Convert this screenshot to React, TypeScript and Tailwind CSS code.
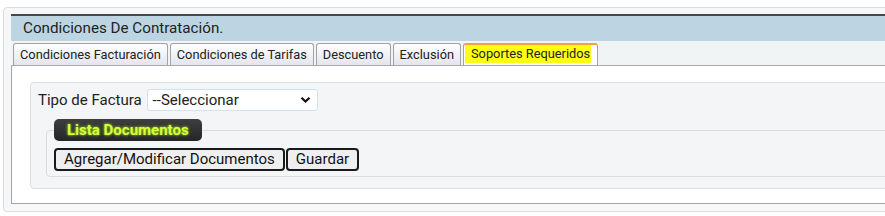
import React from "react";

const tabs = ["Condiciones Facturación", "Condiciones de Tarifas", "Descuento", "Exclusión"];

export default function App() {
  return (
    <div className="w-[885px] h-[216px] overflow-hidden bg-white font-['Roboto',sans-serif] text-[#222]">
      <div className="ml-[3px] mt-[7px] w-[900px] h-[205px] border border-[#dcdcdc] rounded-[4px] bg-[#f6f7f8] pl-[7px] pt-[6px]">
        <div className="border-t-2 border-[#474747]">
          <div className="h-[25px] bg-[#bdd5e3] pl-[12px] flex items-center text-[15.2px] text-[#222]">
            Condiciones De Contratación.
          </div>
          <div className="h-[25px] bg-[#f1f4f5] border-b border-[#a9a9a9] flex items-end gap-[2px] pl-[2px]">
            {tabs.map((t) => (
              <div
                key={t}
                className="h-[22px] px-[6px] flex items-center text-[12.8px] text-[#222] border border-b-0 border-[#a3a3a3] rounded-t-[3px] bg-gradient-to-b from-white to-[#e4e4ef]"
              >
                {t}
              </div>
            ))}
            <div className="h-[22px] pl-[1px] pr-[6px] pb-[2px] flex items-stretch text-[12.8px] text-[#222] border border-b-0 border-[#a3a3a3] border-t-2 border-t-[#f0a43a] rounded-t-[3px] bg-white">
              <span className="bg-[#ffff14] pl-[6px] pr-[1px] flex items-center">Soportes Requeridos</span>
            </div>
          </div>
          <div className="h-[138px] bg-white border-l border-b border-[#a5a5a5] pl-[18px] pt-[16px]">
            <div className="h-[107px] border border-[#dedede] rounded-[4px] bg-[#f3f5f6] pt-[6px]">
              <div className="flex items-center pl-[7px] h-[22px] text-[15px]">
                <span className="mr-[5px]">Tipo de Factura</span>
                <div className="relative w-[171px] h-[22px] bg-white border border-[#cfe3f1] rounded-[3px] flex items-center pl-[5px] text-[15px]">
                  --Seleccionar
                  <svg className="absolute right-[6px] top-[6px]" width="11" height="8" viewBox="0 0 11 8">
                    <path d="M1.5 1.8 L5.5 5.6 L9.5 1.8" fill="none" stroke="#111" strokeWidth="2.2" />
                  </svg>
                </div>
              </div>
              <fieldset className="ml-[15px] mt-[8px] w-[900px] border border-[#dcdcdc] rounded-[4px] pl-[7px] pb-[5px]">
                <legend className="h-[22px] px-[13px] rounded-[5px] bg-gradient-to-b from-[#3e3e3e] to-[#262626] text-[#d4ff3a] font-bold text-[15px] leading-[22px] [text-shadow:0_0_3px_#b8ff20]">
                  Lista Documentos
                </legend>
                <div className="flex gap-[1px] mt-[7px]">
                  <button className="h-[23px] px-[8px] border-2 border-[#1a1a1a] rounded-[4px] bg-[#efefef] text-[15px] text-[#111] leading-none">
                    Agregar/Modificar Documentos
                  </button>
                  <button className="h-[23px] px-[8px] border-2 border-[#1a1a1a] rounded-[4px] bg-[#efefef] text-[15px] text-[#111] leading-none">
                    Guardar
                  </button>
                </div>
              </fieldset>
            </div>
          </div>
        </div>
      </div>
    </div>
  );
}
